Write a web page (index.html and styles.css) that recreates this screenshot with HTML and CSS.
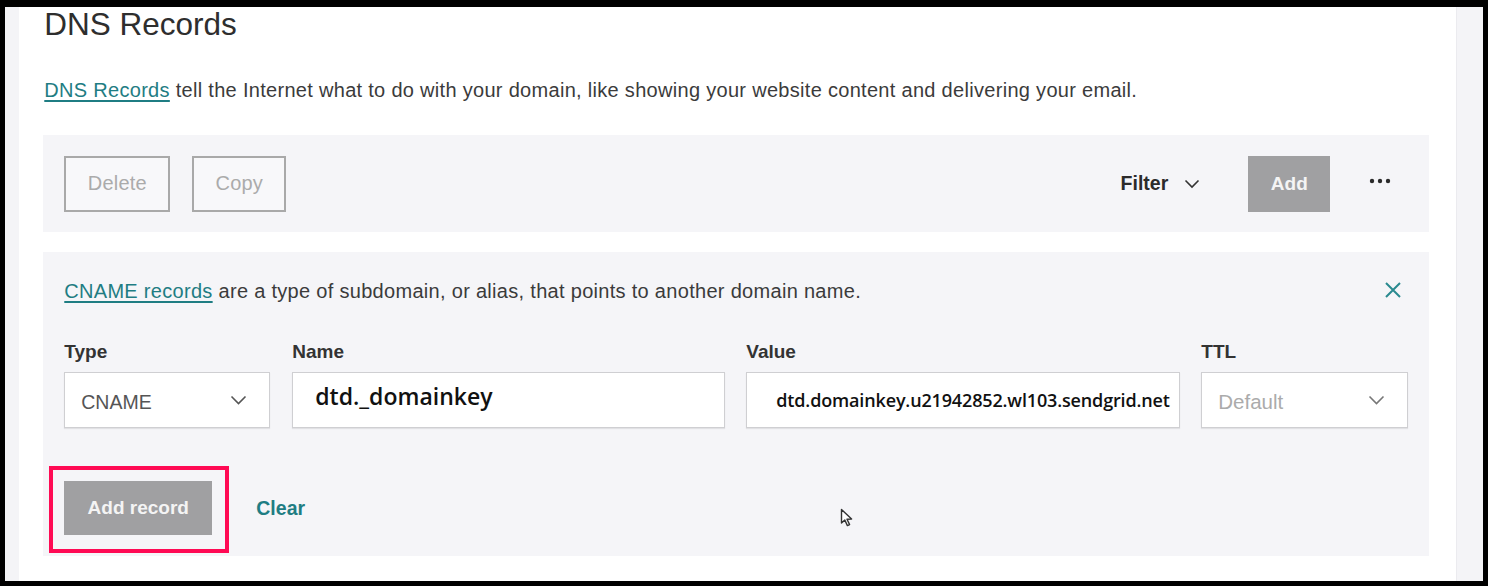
FILE: index.html
```html
<!DOCTYPE html>
<html lang="en">
<head>
<meta charset="utf-8">
<title>DNS Records</title>
<link rel="stylesheet" href="styles.css">
</head>
<body>
<div class="frame">
  <div class="side-left"></div>
  <main class="main">
    <h1 class="title">DNS Records</h1>
    <p class="intro"><a class="link" href="#">DNS Records</a> tell the Internet what to do with your domain, like showing your website content and delivering your email.</p>

    <section class="toolbar">
      <div class="toolbar-left">
        <button class="btn-outline btn-delete">Delete</button>
        <button class="btn-outline btn-copy">Copy</button>
      </div>
      <div class="toolbar-right">
        <button class="filter">Filter
          <svg class="chev-sm" width="16" height="10" viewBox="0 0 16 10"><path d="M1.5 1.5 L8 8 L14.5 1.5" fill="none" stroke="#333" stroke-width="1.6"/></svg>
        </button>
        <button class="btn-add">Add</button>
        <button class="more" aria-label="More">
          <svg width="22" height="6" viewBox="0 0 22 6"><circle cx="3" cy="3" r="2.2" fill="#2b2b2b"/><circle cx="11" cy="3" r="2.2" fill="#2b2b2b"/><circle cx="19" cy="3" r="2.2" fill="#2b2b2b"/></svg>
        </button>
      </div>
    </section>

    <section class="editor">
      <div class="info">
        <p class="info-text"><a class="link" href="#">CNAME records</a> are a type of subdomain, or alias, that points to another domain name.</p>
        <button class="close" aria-label="Close">
          <svg width="18" height="18" viewBox="0 0 18 18"><path d="M2 2 L16 16 M16 2 L2 16" stroke="#2a8a90" stroke-width="2" fill="none"/></svg>
        </button>
      </div>

      <div class="fields">
        <div class="field f-type">
          <label class="label">Type</label>
          <div class="control select">
            <span class="select-val">CNAME</span>
            <svg width="17" height="10" viewBox="0 0 17 10"><path d="M1.5 1.5 L8.5 8.5 L15.5 1.5" fill="none" stroke="#555" stroke-width="1.6"/></svg>
          </div>
        </div>
        <div class="field f-name">
          <label class="label">Name</label>
          <div class="control input"><span class="name-val">dtd._domainkey</span></div>
        </div>
        <div class="field f-value">
          <label class="label">Value</label>
          <div class="control input"><span class="value-val">dtd.domainkey.u21942852.wl103.sendgrid.net</span></div>
        </div>
        <div class="field f-ttl">
          <label class="label">TTL</label>
          <div class="control select">
            <span class="select-ph">Default</span>
            <svg width="17" height="10" viewBox="0 0 17 10"><path d="M1.5 1.5 L8.5 8.5 L15.5 1.5" fill="none" stroke="#777" stroke-width="1.6"/></svg>
          </div>
        </div>
      </div>

      <div class="actions">
        <div class="highlight">
          <button class="btn-record">Add record</button>
        </div>
        <a class="clear" href="#">Clear</a>
      </div>

      <svg class="cursor" width="14" height="20" viewBox="0 0 14 20"><path d="M1.5 1.5 L1.5 15 L4.8 12 L7.4 17.6 L9.6 16.6 L7 11.2 L11.6 11 Z" fill="#fff" stroke="#333" stroke-width="1.4" stroke-linejoin="round"/></svg>
    </section>
  </main>
  <div class="side-right"></div>
</div>
</body>
</html>
```

FILE: styles.css
```css
html, body {
  margin: 0;
  padding: 0;
  background: #000;
}

body {
  width: 1488px;
  height: 586px;
  overflow: hidden;
  font-family: "Liberation Sans", Arial, sans-serif;
  color: #2b2b2b;
}

.frame {
  margin: 7px 5px 0 5px;
  height: 574px;
  background: #fff;
  display: flex;
}

.side-left {
  width: 15px;
  background: #f4f4f7;
}

.side-right {
  width: 27px;
  background: #f4f4f7;
  border-left: 1px solid #ebebef;
}

.main {
  flex: 1;
  padding: 0 27px 0 24px;
  position: relative;
}

.title {
  margin: 0 0 0 1px;
  font-size: 31.5px;
  line-height: 34px;
  font-weight: 400;
  color: #2e2e2e;
  height: 34px;
}

.intro {
  margin: 37px 0 0 1px;
  font-size: 20px;
  letter-spacing: 0.3px;
  line-height: 24px;
  color: #3b3b3b;
}

.link {
  color: #1f7d83;
  text-decoration: underline;
  text-underline-offset: 3px;
}

.toolbar {
  margin-top: 33px;
  height: 97px;
  background: #f5f5f8;
  display: flex;
  align-items: center;
  justify-content: space-between;
  padding: 0 38px 0 21px;
}

.toolbar-left {
  display: flex;
  gap: 22px;
}

button {
  font-family: inherit;
  cursor: default;
}

.btn-outline {
  height: 56px;
  background: #f8f8fa;
  border: 2px solid #a9a9a9;
  color: #ababab;
  font-size: 20px;
  letter-spacing: 0.2px;
  padding: 0;
}

.btn-delete { width: 106px; }
.btn-copy { width: 94px; }

.toolbar-right {
  display: flex;
  align-items: center;
}

.filter {
  display: flex;
  align-items: center;
  gap: 16px;
  background: none;
  border: 0;
  padding: 0;
  font-size: 19.5px;
  font-weight: 700;
  color: #2b2b2b;
}

.btn-add {
  margin-left: 48px;
  width: 82px;
  height: 56px;
  background: #a0a0a2;
  border: 0;
  color: #f4f4f4;
  font-size: 19px;
  font-weight: 700;
}

.more {
  margin-left: 39px;
  background: none;
  border: 0;
  padding: 0;
  display: flex;
  margin-top: -6px;
}

.editor {
  margin-top: 20px;
  background: #f5f5f8;
  padding: 27px 21px 3px 21px;
  position: relative;
  height: 274px;
}

.info {
  display: flex;
  justify-content: space-between;
  align-items: center;
  height: 24px;
}

.info-text {
  margin: 0;
  font-size: 20px;
  letter-spacing: 0.3px;
  line-height: 24px;
  color: #3b3b3b;
}

.close {
  background: none;
  border: 0;
  padding: 0;
  margin-right: 6px;
  margin-top: -3px;
  display: flex;
}

.fields {
  margin-top: 37px;
  display: flex;
  gap: 22px;
}

.field {
  display: flex;
  flex-direction: column;
}

.f-type { width: 206px; }
.f-name { width: 433px; }
.f-value { width: 434px; }
.f-ttl { width: 207px; }

.fields .f-value { margin-left: -1px; }
.fields .f-ttl { margin-left: -1px; }

.label {
  height: 24px;
  line-height: 24px;
  margin-bottom: 8px;
  font-size: 19px;
  font-weight: 700;
  color: #333;
}

.control {
  height: 56px;
  box-sizing: border-box;
  background: #fff;
  border: 1px solid #cfcfd2;
  box-shadow: 0 1px 1px rgba(0,0,0,0.08);
  display: flex;
  align-items: center;
}

.select {
  justify-content: space-between;
  padding: 0 22px 0 16px;
}

.select-val {
  font-size: 19.5px;
  color: #555;
  padding-top: 4px;
}

.select-ph {
  font-size: 20.5px;
  color: #ababab;
  padding-top: 4px;
}

.input {
  padding: 0 0 0 22px;
}

.name-val {
  font-family: "Open Sans", "Liberation Sans", sans-serif;
  font-size: 23px;
  font-weight: 600;
  color: #111;
  margin-top: -8px;
}

.f-value .input { padding-left: 29px; }

.value-val {
  font-family: "Open Sans", "Liberation Sans", sans-serif;
  font-size: 18px;
  font-weight: 600;
  color: #111;
  letter-spacing: -0.15px;
  white-space: nowrap;
  margin-top: 0;
}

.actions {
  margin-top: 38px;
  display: flex;
  align-items: center;
}

.highlight {
  margin-left: -15px;
  width: 180px;
  height: 87px;
  box-sizing: border-box;
  border: 4px solid #ff0a54;
  padding: 11px 13px 0 11px;
}

.btn-record {
  width: 148px;
  height: 54px;
  background: #a0a0a2;
  border: 0;
  color: #f4f4f4;
  font-size: 19px;
  font-weight: 700;
  padding: 0;
}

.clear {
  margin-left: 27px;
  color: #1f7d83;
  font-size: 19.5px;
  font-weight: 700;
  text-decoration: none;
  margin-top: -2px;
}

.cursor {
  position: absolute;
  left: 797px;
  top: 256px;
}
```
